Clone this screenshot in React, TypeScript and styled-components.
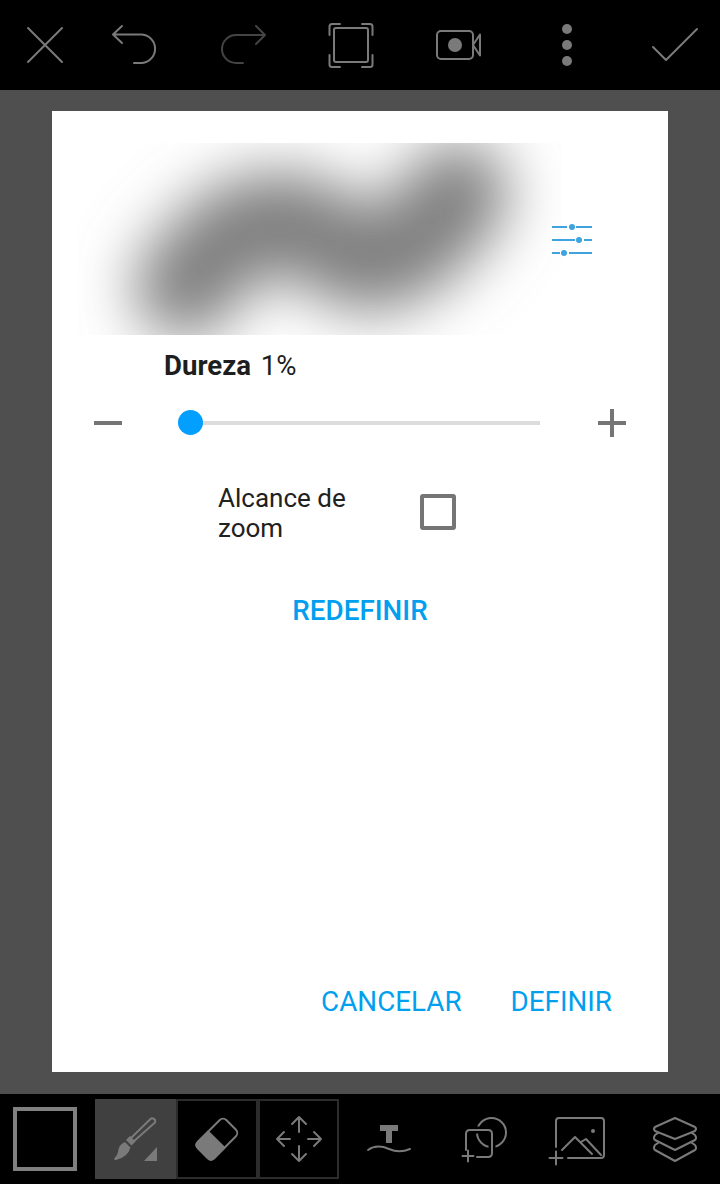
import React from 'react';
import styled, { createGlobalStyle } from 'styled-components';

const GlobalStyle = createGlobalStyle`
  html, body {
    margin: 0;
    padding: 0;
    background: #4f4f4f;
    font-family: 'Roboto', 'Liberation Sans', sans-serif;
  }
`;

const Screen = styled.div`
  width: 720px;
  height: 1184px;
  display: flex;
  flex-direction: column;
  overflow: hidden;
  background: #4f4f4f;
`;

const TopBar = styled.div`
  flex: 0 0 90px;
  display: flex;
  background: #000;
`;

const TopCell = styled.div<{ $gap?: boolean }>`
  flex: 0 0 90px;
  height: 90px;
  margin-left: ${(p) => (p.$gap ? '18px' : '0')};
`;

const Glyph = styled.svg`
  display: block;
  fill: none;
  stroke: #7a7a7a;
  stroke-width: 2;
  stroke-linecap: round;
  stroke-linejoin: round;
`;

const Backdrop = styled.div`
  flex: 1;
  padding: 21px 52px 22px;
  display: flex;
`;

const Dialog = styled.div`
  flex: 1;
  display: flex;
  flex-direction: column;
  background: #fff;
  padding: 32px 0 0;
`;

const Preview = styled.div`
  position: relative;
  align-self: flex-start;
  width: 484px;
  height: 192px;
  margin-left: 26px;
`;

const BrushStroke = styled.svg`
  display: block;
`;

const TuneButton = styled.svg`
  position: absolute;
  left: 474px;
  top: 81px;
  stroke: #3fa4dd;
  stroke-width: 2;
  fill: none;
`;

const Label = styled.div`
  margin: 15px 0 0 112px;
  font-size: 27.6px;
  line-height: 32px;
  color: #1e1e1e;

  b {
    font-weight: 700;
    margin-right: 3px;
  }
`;

const SliderRow = styled.div`
  display: flex;
  align-items: center;
  height: 32px;
  margin: 25px 0 0 42px;
`;

const StepIcon = styled.svg`
  flex: 0 0 28px;
  stroke: #757575;
  stroke-width: 4;
`;

const Track = styled.div`
  position: relative;
  width: 350px;
  height: 4px;
  margin: 0 58px 0 68px;
  background: #dcdcdc;
`;

const Thumb = styled.div`
  position: absolute;
  left: -12px;
  top: -11px;
  width: 25px;
  height: 25px;
  border-radius: 50%;
  background: #029fff;
`;

const OptionRow = styled.div`
  display: flex;
  align-items: center;
  margin: 41px 0 0 166px;
`;

const OptionText = styled.div`
  width: 202px;
  padding-top: 3px;
  font-size: 26px;
  line-height: 30px;
  color: #212121;
`;

const Checkbox = styled.div`
  box-sizing: border-box;
  width: 36px;
  height: 36px;
  border: 4px solid #757575;
  border-radius: 3px;
`;

const ActionText = styled.span<{ $medium?: boolean }>`
  font-size: 27.8px;
  line-height: 32px;
  color: #029fef;
  font-weight: ${(p) => (p.$medium ? 500 : 400)};
`;

const ResetRow = styled.div`
  display: flex;
  justify-content: center;
  margin-top: 52px;
`;

const Footer = styled.div`
  margin-top: auto;
  display: flex;
  justify-content: flex-end;
  gap: 49px;
  padding: 0 56px 54px 0;
`;

const BottomBar = styled.div`
  flex: 0 0 90px;
  display: flex;
  align-items: center;
  background: #000;
`;

const ColorSwatch = styled.div`
  flex: none;
  box-sizing: border-box;
  width: 64px;
  height: 64px;
  margin-left: 13px;
  border: 4px solid #808080;
`;

const ToolGroup = styled.div`
  flex: none;
  display: flex;
  margin: 0 3px 0 18px;
  height: 80px;
`;

const ToolTile = styled.div<{ $active?: boolean }>`
  box-sizing: border-box;
  width: 81.33px;
  height: 80px;
  background: ${(p) => (p.$active ? '#404040' : '#000')};
  border: 2px solid ${(p) => (p.$active ? '#404040' : '#2c2c2c')};
`;

const ToolCell = styled.div`
  flex: 0 0 95px;
  height: 90px;
`;

const TOP = { width: 90, height: 90, viewBox: '0 0 90 90' };
const TILE = { width: 77, height: 76, viewBox: '2 2 77 76' };
const CELL = { width: 95, height: 90, viewBox: '0 0 95 90' };

const App: React.FC = () => {
  return (
    <Screen>
      <GlobalStyle />
      <TopBar>
        <TopCell>
          <Glyph {...TOP}>
            <path d="M28 28 L62 62 M62 28 L28 62" />
          </Glyph>
        </TopCell>
        <TopCell>
          <Glyph {...TOP}>
            <path d="M32 26 L23 34.5 L32 43 M23 34.5 H52 A14.3 14.3 0 0 1 52 63 H44" />
          </Glyph>
        </TopCell>
        <TopCell $gap>
          <Glyph {...TOP} style={{ stroke: '#444' }}>
            <path d="M58 26 L67 35 L58 44 M67 35 H38 A14 14 0 0 0 38 63 H45" />
          </Glyph>
        </TopCell>
        <TopCell $gap>
          <Glyph {...TOP}>
            <rect x="28" y="28" width="34" height="34" rx="2" />
            <path d="M34 24 H26 Q23.5 24 23.5 26.5 V35 M23.5 55 V64.5 Q23.5 67 26 67 H34 M56 24 H64 Q66.5 24 66.5 26.5 V35 M66.5 55 V64.5 Q66.5 67 64 67 H56" />
          </Glyph>
        </TopCell>
        <TopCell $gap>
          <Glyph {...TOP}>
            <rect x="23" y="31" width="36" height="28" rx="4" />
            <circle cx="41" cy="45" r="7" fill="#7a7a7a" stroke="none" />
            <path d="M59 45 L66 34.5 V55.5 Z" />
          </Glyph>
        </TopCell>
        <TopCell $gap>
          <Glyph {...TOP} style={{ fill: '#7a7a7a', stroke: 'none' }}>
            <circle cx="45" cy="29" r="5" />
            <circle cx="45" cy="45" r="5" />
            <circle cx="45" cy="61" r="5" />
          </Glyph>
        </TopCell>
        <TopCell $gap>
          <Glyph {...TOP}>
            <path d="M23 47 L36 60 L67 29" />
          </Glyph>
        </TopCell>
      </TopBar>

      <Backdrop>
        <Dialog>
          <Preview>
            <BrushStroke width="484" height="192" viewBox="0 0 484 192">
              <defs>
                <filter id="soft" filterUnits="userSpaceOnUse" x="-150" y="-150" width="800" height="500">
                  <feGaussianBlur stdDeviation="30" />
                </filter>
              </defs>
              <path
                d="M107 144 C140 100 165 80 204 80 C245 80 260 117 290 117 C325 117 355 85 380 50"
                fill="none"
                stroke="#7e7e7e"
                strokeWidth="100"
                strokeLinecap="round"
                filter="url(#soft)"
              />
            </BrushStroke>
            <TuneButton width="40" height="32" viewBox="0 0 40 32">
              <path d="M0 4 H15 M24 4 H40 M0 17 H23 M32 17 H40 M0 30 H8 M17 30 H40" transform="translate(0 -1)" />
              <circle cx="20" cy="3" r="3" fill="#3fa4dd" stroke="none" />
              <circle cx="27" cy="16" r="3" fill="#3fa4dd" stroke="none" />
              <circle cx="12" cy="29" r="3" fill="#3fa4dd" stroke="none" />
            </TuneButton>
          </Preview>

          <Label>
            <b>Dureza</b> 1%
          </Label>

          <SliderRow>
            <StepIcon width="28" height="28" viewBox="0 0 28 28">
              <path d="M0 14 H28" />
            </StepIcon>
            <Track>
              <Thumb />
            </Track>
            <StepIcon width="28" height="28" viewBox="0 0 28 28">
              <path d="M0 14 H28 M14 0 V28" />
            </StepIcon>
          </SliderRow>

          <OptionRow>
            <OptionText>
              Alcance de
              <br />
              zoom
            </OptionText>
            <Checkbox />
          </OptionRow>

          <ResetRow>
            <ActionText $medium>REDEFINIR</ActionText>
          </ResetRow>

          <Footer>
            <ActionText>CANCELAR</ActionText>
            <ActionText>DEFINIR</ActionText>
          </Footer>
        </Dialog>
      </Backdrop>

      <BottomBar>
        <ColorSwatch />
        <ToolGroup>
          <ToolTile $active>
            <Glyph {...TILE}>
              <path d="M58 19.5 Q61 20.5 60 23.5 L38 43 L35 40 L55.5 20 Q56.5 19 58 19.5 Z" />
              <path d="M31 41 L35 37 L40.5 42.5 L36.5 46.5 Z" fill="#7a7a7a" stroke="none" />
              <path d="M30 43 L35.5 48.5 Q33 58 21 61 Q18.5 61 19.5 59 Q23 56 23.5 50 Q25 45 30 43 Z" fill="#7a7a7a" stroke="none" />
              <path d="M49 62 H62 V48 Z" fill="#7a7a7a" stroke="none" />
            </Glyph>
          </ToolTile>
          <ToolTile>
            <Glyph {...TILE}>
              <g transform="translate(41 40) rotate(45)">
                <rect x="-11.5" y="-20" width="23" height="40" rx="5" />
                <path d="M-12.5 0 H12.5 V16 Q12.5 21 7.5 21 H-7.5 Q-12.5 21 -12.5 16 Z" fill="#7a7a7a" stroke="none" />
              </g>
            </Glyph>
          </ToolTile>
          <ToolTile>
            <Glyph {...TILE}>
              <path d="M41 18 V33 M34 25 L41 18 L48 25 M41 62 V47 M34 55 L41 62 L48 55 M19 40 H32 M26 33 L19 40 L26 47 M63 40 H50 M56 33 L63 40 L56 47" />
            </Glyph>
          </ToolTile>
        </ToolGroup>
        <ToolCell>
          <Glyph {...CELL}>
            <path d="M38 31 H56 V37 H50 V49 H44 V37 H38 Z" fill="#7a7a7a" stroke="none" />
            <path d="M26 56 C33 51 40 52 47 55 C54 58 61 58 68 55" />
          </Glyph>
        </ToolCell>
        <ToolCell>
          <Glyph {...CELL}>
            <circle cx="54.5" cy="38.5" r="14.5" />
            <path d="M29 56 V40 Q29 36 33 36 H51 Q55 36 55 40 V59 Q55 63 51 63 H40" stroke="#000" strokeWidth="7" />
            <path d="M29 56 V40 Q29 36 33 36 H51 Q55 36 55 40 V59 Q55 63 51 63 H40" />
            <path d="M31 56.5 V67.5 M25.5 62 H36.5" />
          </Glyph>
        </ToolCell>
        <ToolCell>
          <Glyph {...CELL}>
            <path d="M24 53 V27 Q24 24 27 24 H69 Q72 24 72 27 V61 Q72 64 69 64 H36" />
            <path d="M24 57.5 V70.5 M17.5 64 H30.5" />
            <path d="M30 56 L43 43 L60 60 M49 48 L54 45 L69 61" />
            <circle cx="61" cy="37" r="2" fill="#7a7a7a" stroke="none" />
          </Glyph>
        </ToolCell>
        <ToolCell>
          <Glyph {...CELL}>
            <path d="M48 24 L68 33 Q70 35 68 37 L48 45 L28 37 Q26 35 28 33 Z" />
            <path d="M31 39 L28 41 Q26 44 28 46 L48 56 L68 46 Q70 44 68 41 L65 39" />
            <path d="M31 49 L28 51 Q26 54 28 56 L48 67 L68 56 Q70 54 68 51 L65 49" />
          </Glyph>
        </ToolCell>
      </BottomBar>
    </Screen>
  );
};

export default App;
